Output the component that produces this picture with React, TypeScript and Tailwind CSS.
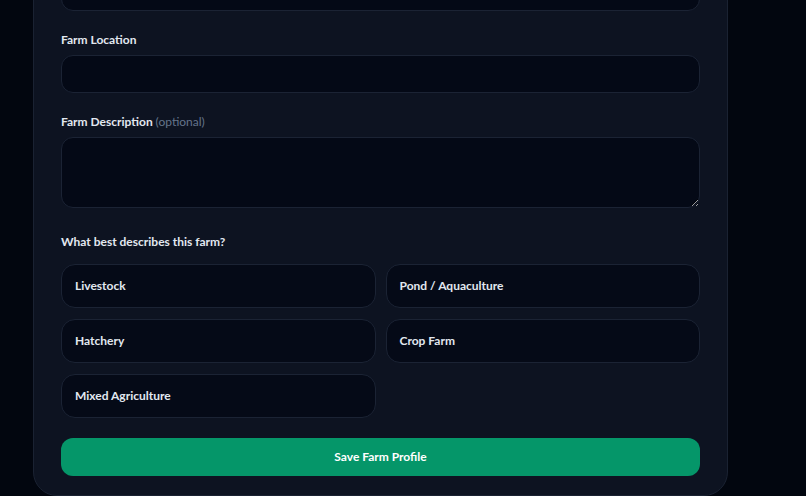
const farmTypes = ['Livestock', 'Pond / Aquaculture', 'Hatchery', 'Crop Farm', 'Mixed Agriculture']

const font = { fontFamily: '"Segoe UI", Lato, "Noto Sans", sans-serif' }

function Label({ children }: { children: React.ReactNode }) {
  return <label className="block text-[12px] leading-4 font-bold text-[#e2e8f0] mb-[7px]">{children}</label>
}

export default function App() {
  return (
    <div className="h-[496px] overflow-hidden bg-[#02060f]" style={font}>
      <div className="ml-[33px] mt-[-78px] w-[695px] rounded-[24px] border border-[#1a2232] bg-[#0d1321] px-[27px] pt-[27px] pb-[19px]">
        {/* first field sits above the visible area */}
        <div className="mb-[21px] pt-[23px]">
          <input className="block w-full h-[38px] rounded-xl border border-[#1b2334] bg-[#040916] px-3 outline-none" />
        </div>

        <div className="mb-[21px]">
          <Label>Farm Location</Label>
          <input className="block w-full h-[38px] rounded-xl border border-[#1b2334] bg-[#040916] px-3 outline-none" />
        </div>

        <div className="mb-[26px]">
          <Label>
            Farm Description <span className="font-normal text-[#64748b]">(optional)</span>
          </Label>
          <textarea className="block w-full h-[71px] rounded-xl border border-[#1b2334] bg-[#040916] px-3 py-2 outline-none" />
        </div>

        <div className="text-[12px] leading-4 font-bold text-[#e2e8f0] mb-[14px]">What best describes this farm?</div>

        <div className="grid grid-cols-2 gap-x-[10px] gap-y-[11px]">
          {farmTypes.map((t) => (
            <button
              key={t}
              className="h-[44px] rounded-[14px] border border-[#1b2334] bg-[#050a17] px-[13px] text-left text-[12px] font-bold text-[#e2e8f0]"
            >
              {t}
            </button>
          ))}
        </div>

        <button className="mt-[20px] block w-full h-[38px] rounded-xl bg-[#059669] text-[12px] font-bold text-white">
          Save Farm Profile
        </button>
      </div>
    </div>
  )
}
